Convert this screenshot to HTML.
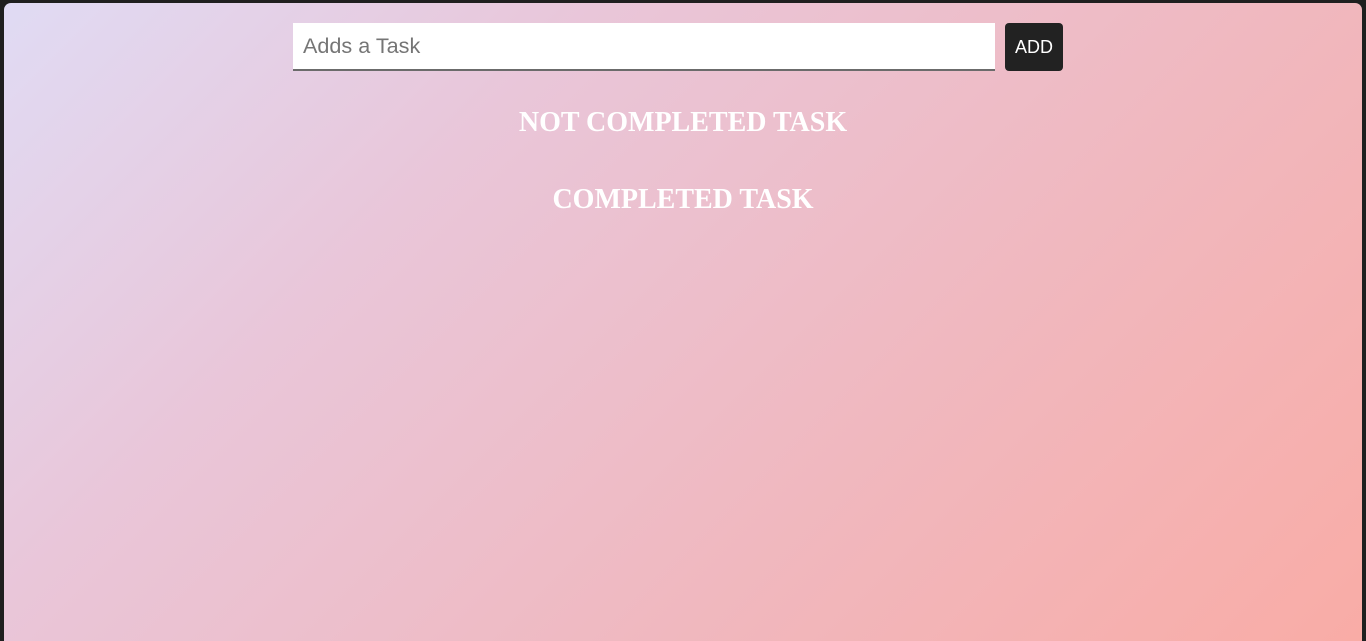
<!DOCTYPE html>
<html><head><style>
html,body{margin:0;padding:0;width:1366px;height:641px;overflow:hidden;background:#1f1f1f;}
.main{position:absolute;left:4px;top:3px;width:1358px;height:638px;border-radius:7px 7px 0 0;
background:linear-gradient(135deg,#e0dbf4 0%,#e9c6d9 30%,#f0b8bf 65%,#f9aca6 100%);}
.inp{position:absolute;left:289px;top:20px;width:702px;height:46px;background:#fff;border-bottom:2px solid #6b6b6b;
font:21.6px "Liberation Sans",sans-serif;color:#757575;line-height:46px;}
.inp span{padding-left:10px;}
.btn{position:absolute;left:1001px;top:20px;width:58px;height:48px;background:#222;border-radius:4px;color:#fff;
font:18px "Liberation Sans",sans-serif;text-align:center;line-height:48px;}
h2{position:absolute;left:0;width:1358px;margin:0;text-align:center;color:#fff;font:bold 28px "Liberation Serif",serif;}
</style></head><body>
<div class="main">
<div class="inp"><span>Adds a Task</span></div>
<div class="btn">ADD</div>
<h2 style="top:104px">NOT COMPLETED TASK</h2>
<h2 style="top:181px">COMPLETED TASK</h2>
</div>
</body></html>
